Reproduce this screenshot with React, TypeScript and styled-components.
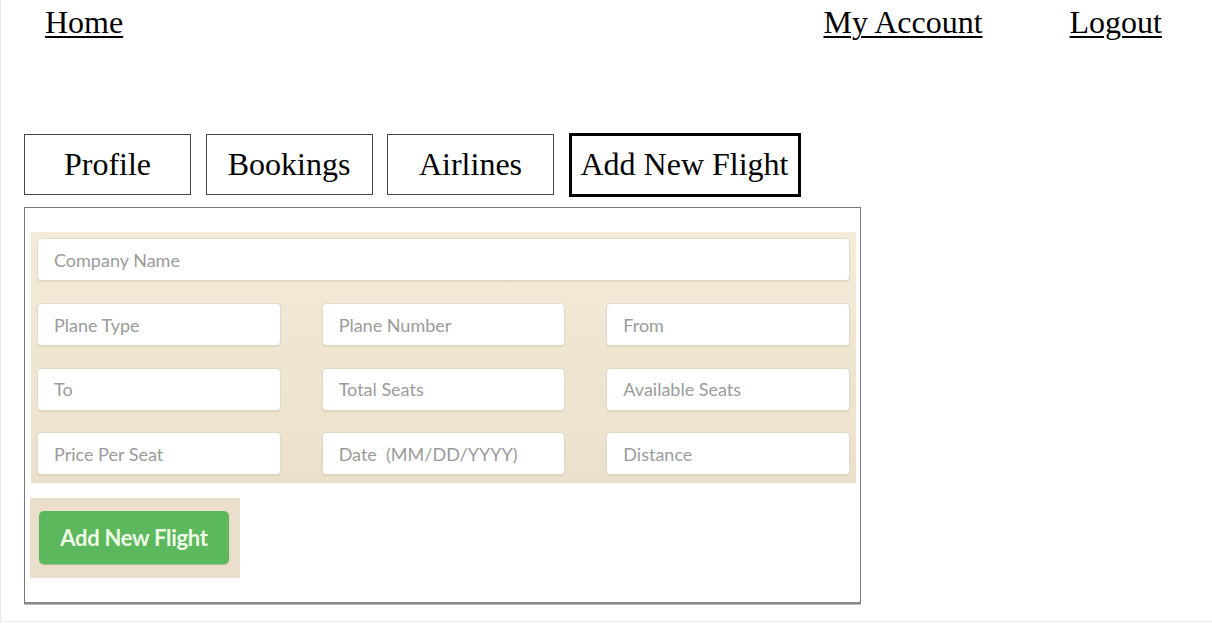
import React from "react";
import styled, { createGlobalStyle } from "styled-components";

const Global = createGlobalStyle`
  html, body { margin: 0; padding: 0; background: #fff; }
  body { font-family: "Liberation Serif", "Times New Roman", serif; color: #000; }
  * { box-sizing: border-box; }
`;

const Page = styled.div`
  width: 1212px;
  height: 622px;
  border-left: 1px solid #e9e9e9;
  border-bottom: 1px solid #efefef;
  overflow: hidden;
`;

const Nav = styled.nav`
  display: flex;
  justify-content: space-between;
  align-items: flex-start;
  padding: 4px 50px 0 44px;
  height: 132px;
`;

const NavGroup = styled.div`
  display: flex;
  gap: 87px;
`;

const NavLink = styled.a`
  font-size: 32px;
  line-height: 37px;
  color: #000;
  text-decoration: underline;
  text-underline-offset: 3px;
  text-decoration-thickness: 1.5px;
  cursor: pointer;
`;

const Tabs = styled.div`
  display: flex;
  align-items: center;
  gap: 14.5px;
  padding-left: 23px;
  height: 65px;
`;

const Tab = styled.div<{ $active?: boolean }>`
  display: flex;
  align-items: center;
  justify-content: center;
  min-width: 167px;
  height: ${(p) => (p.$active ? 64 : 61)}px;
  padding: 0 9px;
  border: ${(p) => (p.$active ? "3px solid #000" : "1px solid #444")};
  font-size: 32px;
  line-height: 37px;
  white-space: nowrap;
`;

const Panel = styled.div`
  margin: 10px 0 0 23px;
  width: 837px;
  height: 397px;
  border: 1px solid #777;
  border-bottom: 2px solid #888;
  box-shadow: 0 1px 0 #bbb;
  padding: 23px 4px 0 6px;
`;

const FormArea = styled.div`
  background: linear-gradient(180deg, #f3ecd8 0%, #efe6d2 50%, #ebe0cc 100%);
  padding: 6px 6px 8px 6px;
  margin-top: 1px;
  display: flex;
  flex-direction: column;
  gap: 22px;
`;

const Grid = styled.div`
  display: grid;
  grid-template-columns: repeat(3, 1fr);
  column-gap: 41px;
  row-gap: 21.5px;
`;

const Field = styled.input`
  display: block;
  width: 100%;
  height: 43px;
  border: 1px solid #e2dac8;
  border-radius: 4px;
  background: #fff;
  box-shadow: 0 1px 1px rgba(150, 130, 100, 0.18);
  padding: 0 16px;
  font-family: Lato, "Open Sans", sans-serif;
  font-size: 18px;
  color: #555;
  outline: none;
  &::placeholder {
    color: #9b9b9b;
  }
`;

const ButtonWell = styled.div`
  margin-top: 15px;
  margin-left: -1px;
  width: 210px;
  height: 80px;
  background: #ebdfcc;
  padding: 13px 0 0 9px;
`;

const GreenButton = styled.button`
  width: 190px;
  height: 53px;
  border: none;
  border-radius: 5px;
  background: #5cb85c;
  box-shadow: 0 1px 1px rgba(60, 120, 60, 0.4);
  color: #eefbe6;
  font-family: Lato, "Open Sans", sans-serif;
  font-weight: 700;
  font-size: 22px;
  letter-spacing: -0.3px;
  cursor: pointer;
`;

const row1 = ["Plane Type", "Plane Number", "From"];
const row2 = ["To", "Total Seats", "Available Seats"];
const row3 = ["Price Per Seat", "Date  (MM/DD/YYYY)", "Distance"];

export default function App() {
  return (
    <Page>
      <Global />
      <Nav>
        <NavLink>Home</NavLink>
        <NavGroup>
          <NavLink>My Account</NavLink>
          <NavLink>Logout</NavLink>
        </NavGroup>
      </Nav>
      <Tabs>
        <Tab>Profile</Tab>
        <Tab>Bookings</Tab>
        <Tab>Airlines</Tab>
        <Tab $active>Add New Flight</Tab>
      </Tabs>
      <Panel>
        <FormArea>
          <Field placeholder="Company Name" />
          <Grid>
            {[...row1, ...row2, ...row3].map((p) => (
              <Field key={p} placeholder={p} />
            ))}
          </Grid>
        </FormArea>
        <ButtonWell>
          <GreenButton>Add New Flight</GreenButton>
        </ButtonWell>
      </Panel>
    </Page>
  );
}
